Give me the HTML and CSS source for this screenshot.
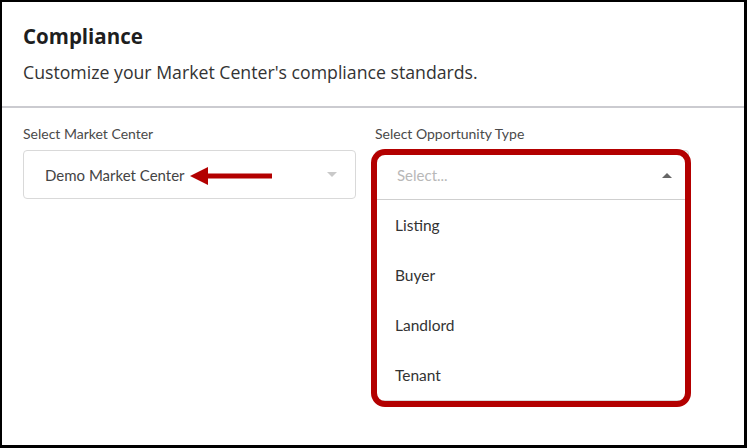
FILE: index.html
```html
<!DOCTYPE html>
<html>
<head>
<meta charset="utf-8">
<link rel="stylesheet" href="styles.css">
</head>
<body>
<div class="frame">
  <header class="header">
    <h1 class="title">Compliance</h1>
    <p class="subtitle">Customize your Market Center's compliance standards.</p>
  </header>
  <section class="form">
    <div class="field field-mc">
      <label class="label">Select Market Center</label>
      <div class="select">
        <span class="value">Demo Market Center</span>
        <span class="caret caret-down"></span>
        <svg class="arrow" width="83" height="18" viewBox="0 0 83 18">
          <polygon points="0,9 18,0 18,18" fill="#b30000"/>
          <rect x="17" y="6.5" width="65" height="5" fill="#b30000"/>
        </svg>
      </div>
    </div>
    <div class="field field-ot">
      <label class="label">Select Opportunity Type</label>
      <div class="dropdown">
        <div class="select select-open">
          <span class="placeholder">Select...</span>
          <span class="caret caret-up"></span>
        </div>
        <ul class="menu">
          <li class="option">Listing</li>
          <li class="option">Buyer</li>
          <li class="option">Landlord</li>
          <li class="option">Tenant</li>
        </ul>
        <div class="highlight"></div>
      </div>
    </div>
  </section>
</div>
</body>
</html>
```

FILE: styles.css
```css
* { box-sizing: border-box; }
html, body { margin: 0; padding: 0; background: #fff; }
.frame {
  width: 747px;
  height: 448px;
  border-style: solid;
  border-color: #000;
  border-width: 2px 3px 3px 2px;
  background: #fff;
  overflow: hidden;
}
.header {
  padding: 20px 0 0 21px;
  height: 106px;
  border-bottom: 2px solid #cbcbd0;
}
.title {
  margin: 0;
  font-family: "Open Sans", "Noto Sans", sans-serif;
  font-weight: 700;
  font-size: 20.5px;
  line-height: 28px;
  color: #1e1e1e;
}
.subtitle {
  margin: 9px 0 0 0;
  font-family: "Open Sans", "Noto Sans", sans-serif;
  font-size: 17.7px;
  line-height: 26px;
  color: #333;
}
.form {
  display: flex;
  gap: 19px;
  padding: 17px 0 0 21px;
}
.field { display: flex; flex-direction: column; }
.field-mc { width: 333px; }
.field-ot { width: 314px; }
.label {
  font-family: "Lato", sans-serif;
  font-size: 14px;
  line-height: 17px;
  color: #4a4a4a;
  margin-bottom: 8px;
}
.select {
  position: relative;
  height: 49px;
  border: 1px solid #d9d9d9;
  border-radius: 4px;
  display: flex;
  align-items: center;
  padding: 0 18px 0 21px;
  font-family: "Lato", sans-serif;
  font-size: 15px;
  color: #444;
}
.value { flex: 1; }
.placeholder { flex: 1; color: #b8b8b8; }
.caret {
  width: 0; height: 0;
  border-left: 5px solid transparent;
  border-right: 5px solid transparent;
}
.caret-down { border-top: 5px solid #c9c9c9; }
.caret-up { border-bottom: 5px solid #666; margin-right: -2px; }
.arrow { position: absolute; left: 166px; top: 16px; }
.dropdown { position: relative; }
.select-open {
  height: 50px;
  border-radius: 4px 4px 0 0;
  border-bottom: 1px solid #cfcfcf;
}
.menu {
  list-style: none;
  margin: 0;
  padding: 0;
  border: 1px solid #d9d9d9;
  border-top: none;
  border-radius: 0 0 4px 4px;
}
.option {
  height: 50px;
  display: flex;
  align-items: center;
  padding: 0 0 1px 19px;
  font-family: "Lato", sans-serif;
  font-size: 15.5px;
  color: #333;
}
.highlight {
  position: absolute;
  left: -4px;
  top: -1px;
  width: 320px;
  height: 258px;
  border: 6px solid #b30000;
  border-radius: 14px;
  pointer-events: none;
}
```
